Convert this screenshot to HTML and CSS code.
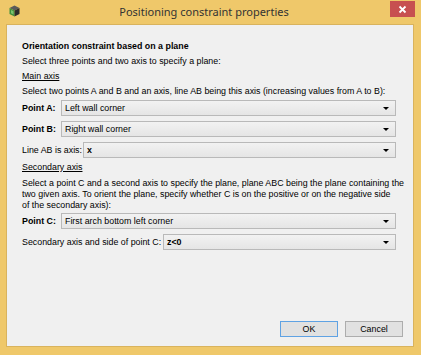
FILE: index.html
```html
<!DOCTYPE html>
<html lang="en">
<head>
    <meta charset="UTF-8">
    <title>Positioning constraint properties</title>
    <link rel="stylesheet" href="styles.css">
</head>
<body>
    <div class="window">
        <div class="titlebar">
            <svg class="app-icon" width="11" height="12" viewBox="0 0 11 12">
                <polygon points="5.5,0.5 10.5,3 5.5,5.5 0.5,3" fill="#5a5a5a"/>
                <polygon points="0.5,3 5.5,5.5 5.5,11.5 0.5,9" fill="#3f8f3a"/>
                <polygon points="5.5,5.5 10.5,3 10.5,9 5.5,11.5" fill="#2b2b2b"/>
                <polygon points="2,5 4.5,6.2 4.5,9.5 2,8.3" fill="#7cc26f"/>
            </svg>
            <div class="title">Positioning constraint properties</div>
            <div class="close-btn">
                <svg width="9" height="9" viewBox="0 0 9 9">
                    <path d="M1.5 1.5 L7.5 7.5 M7.5 1.5 L1.5 7.5" stroke="#fff" stroke-width="1.8"/>
                </svg>
            </div>
        </div>

        <div class="client">
            <div class="line heading">Orientation constraint based on a plane</div>
            <div class="line">Select three points and two axis to specify a plane:</div>
            <div class="line section">Main axis</div>
            <div class="line">Select two points A and B and an axis, line AB being this axis (increasing values from A to B):</div>

            <div class="form-row first">
                <span class="label bold w-point">Point A:</span>
                <div class="combo"><span>Left wall corner</span><i class="arrow"></i></div>
            </div>
            <div class="form-row">
                <span class="label bold w-point">Point B:</span>
                <div class="combo"><span>Right wall corner</span><i class="arrow"></i></div>
            </div>
            <div class="form-row">
                <span class="label w-line">Line AB is axis:</span>
                <div class="combo"><span class="bold">x</span><i class="arrow"></i></div>
            </div>

            <div class="line section second">Secondary axis</div>
            <p class="para">Select a point C and a second axis to specify the plane, plane ABC being the plane containing the<br>two given axis. To orient the plane, specify whether C is on the positive or on the negative side<br>of the secondary axis):</p>

            <div class="form-row third">
                <span class="label bold w-point">Point C:</span>
                <div class="combo"><span>First arch bottom left corner</span><i class="arrow"></i></div>
            </div>
            <div class="form-row">
                <span class="label w-side">Secondary axis and side of point C:</span>
                <div class="combo"><span class="bold">z&lt;0</span><i class="arrow"></i></div>
            </div>

            <div class="buttons">
                <div class="btn default">OK</div>
                <div class="btn">Cancel</div>
            </div>
        </div>
    </div>
</body>
</html>
```

FILE: styles.css
```css
body {
    margin: 0;
    background-color: #efc86a;
    font-family: "Liberation Sans", Arial, sans-serif;
    font-size: 8.85px;
    color: #000;
}
.window {
    width: 421px;
    height: 355px;
    display: flex;
    flex-direction: column;
}
.titlebar {
    height: 24px;
    display: flex;
    align-items: center;
}
.app-icon {
    margin-left: 9px;
    margin-top: -2px;
}
.title {
    flex: 1;
    text-align: center;
    font-family: "Noto Sans", sans-serif;
    font-size: 11px;
    color: #333;
    padding-right: 2px;
    margin-top: -1px;
}
.close-btn {
    width: 25px;
    height: 16px;
    margin-right: 6px;
    align-self: flex-start;
    margin-top: 1px;
    background-color: #c75050;
    display: flex;
    align-items: center;
    justify-content: center;
}
.client {
    flex: 1;
    margin: 0 7px 8px 6px;
    background-color: #f0f0f0;
    border: 1px solid #d9b35d;
    padding: 14px 16px 9px 15px;
    display: flex;
    flex-direction: column;
}
.line {
    height: 15px;
    line-height: 15px;
    white-space: nowrap;
}
.heading {
    font-weight: bold;
}
.section {
    text-decoration: underline;
}
.second {
    margin-top: 2px;
}
.bold {
    font-weight: bold;
}
.form-row {
    display: flex;
    align-items: center;
    height: 16px;
    margin-top: 5px;
}
.form-row.first {
    margin-top: 1px;
}
.form-row.third {
    margin-top: 2px;
}
.label {
    white-space: nowrap;
}
.w-point {
    width: 39px;
}
.w-line {
    width: 61px;
}
.w-side {
    width: 141px;
}
.combo {
    flex: 1;
    height: 14px;
    border: 1px solid #b9b9b9;
    background: linear-gradient(#f2f2f2, #e5e5e5);
    display: flex;
    align-items: center;
    padding-left: 3px;
    padding-right: 6px;
    margin-right: 1px;
}
.combo span {
    flex: 1;
}
.arrow {
    width: 0;
    height: 0;
    border-left: 3px solid transparent;
    border-right: 3px solid transparent;
    border-top: 3px solid #000;
}
.para {
    margin: 3px 0 0 0;
    line-height: 11px;
    white-space: nowrap;
}
.buttons {
    margin-top: auto;
    margin-right: -6px;
    display: flex;
    justify-content: flex-end;
    gap: 7px;
}
.btn {
    width: 56px;
    height: 14px;
    line-height: 14px;
    text-align: center;
    border: 1px solid #adadad;
    background-color: #e1e1e1;
}
.btn.default {
    border-color: #5fa2e3;
}
```
